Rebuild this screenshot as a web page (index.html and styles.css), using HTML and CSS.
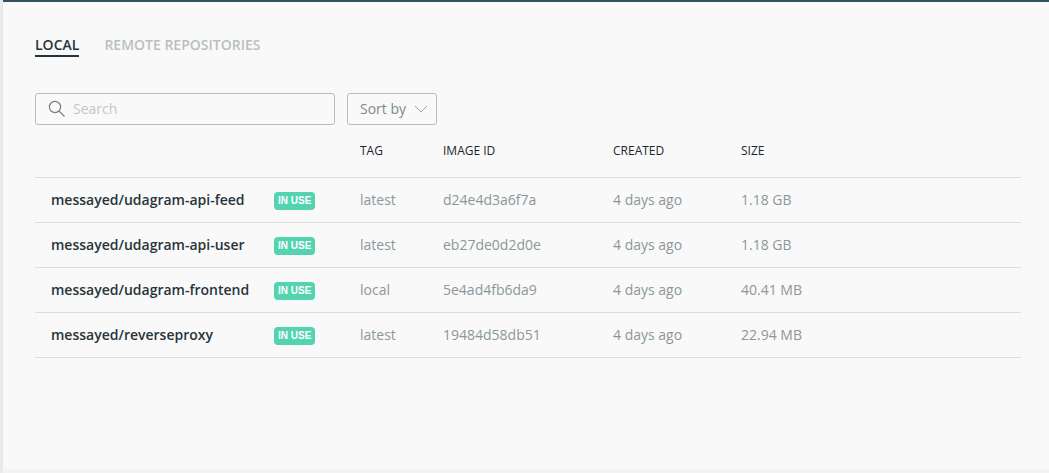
FILE: index.html
```html
<!DOCTYPE html>
<html lang="en">
<head>
<meta charset="utf-8">
<meta name="viewport" content="width=device-width, initial-scale=1">
<title>Images</title>
<link rel="stylesheet" href="styles.css">
</head>
<body>
<main class="page">
  <nav class="tabs" aria-label="Repositories">
    <a class="tab tab-active" href="#local" aria-current="page">LOCAL</a>
    <a class="tab" href="#remote">REMOTE REPOSITORIES</a>
  </nav>
  <form class="toolbar">
    <label class="search">
      <svg class="search-icon" width="18" height="18" viewBox="0 0 18 18" fill="none" stroke="currentColor" stroke-width="1.2" aria-hidden="true">
        <circle cx="7" cy="7" r="5.6"/>
        <path d="M11 11l5.6 5.6"/>
      </svg>
      <input class="search-input" type="search" placeholder="Search" aria-label="Search">
    </label>
    <label class="sort">
      <select class="sort-select" aria-label="Sort by">
        <option>Sort by</option>
      </select>
      <svg class="sort-icon" width="14" height="8" viewBox="0 0 14 8" fill="none" stroke="currentColor" aria-hidden="true">
        <path d="M1 1l6 6 6-6"/>
      </svg>
    </label>
  </form>
  <table class="images">
    <colgroup>
      <col class="col-name"><col class="col-status"><col class="col-tag"><col class="col-id"><col class="col-created"><col>
    </colgroup>
    <thead>
      <tr><td></td><td></td><th scope="col">TAG</th><th scope="col">IMAGE ID</th><th scope="col">CREATED</th><th scope="col">SIZE</th></tr>
    </thead>
    <tbody>
      <tr><th scope="row" class="name">messayed/udagram-api-feed</th><td><span class="badge">IN USE</span></td><td>latest</td><td>d24e4d3a6f7a</td><td>4 days ago</td><td>1.18 GB</td></tr>
      <tr><th scope="row" class="name">messayed/udagram-api-user</th><td><span class="badge">IN USE</span></td><td>latest</td><td>eb27de0d2d0e</td><td>4 days ago</td><td>1.18 GB</td></tr>
      <tr><th scope="row" class="name">messayed/udagram-frontend</th><td><span class="badge">IN USE</span></td><td>local</td><td>5e4ad4fb6da9</td><td>4 days ago</td><td>40.41 MB</td></tr>
      <tr><th scope="row" class="name">messayed/reverseproxy</th><td><span class="badge">IN USE</span></td><td>latest</td><td>19484d58db51</td><td>4 days ago</td><td>22.94 MB</td></tr>
    </tbody>
  </table>
</main>
</body>
</html>
```
FILE: styles.css
```css
* {
  box-sizing: border-box;
}

body {
  margin: 0;
  min-height: 100vh;
  display: flex;
  background: #f9f9f9;
  font-family: "Open Sans", "Noto Sans", sans-serif;
  font-size: 14px;
  line-height: 20px;
  color: #8b9799;
  border-left: 3px solid #e9eaef;
}

.page {
  flex: 1;
  padding: 33px 28px 24px 32px;
  border-top: 2px solid #33535c;
  border-bottom: 4px solid #f3f3f3;
}

.tabs {
  display: flex;
  gap: 25px;
}

.tab {
  color: #b8bfc2;
  font-weight: 600;
  text-decoration: none;
  border-bottom: 2px solid transparent;
}

.tab-active {
  color: #27343b;
  border-bottom-color: #27343b;
}

.toolbar {
  display: flex;
  gap: 12px;
  margin-top: 36px;
}

.search,
.sort {
  display: flex;
  align-items: center;
  height: 32px;
  border: 1px solid #b8bcbe;
  border-radius: 3px;
}

.search {
  width: 300px;
  gap: 7px;
  padding: 0 12px;
}

.search-icon {
  flex: none;
  color: #737c80;
}

.search-input,
.sort-select {
  appearance: none;
  border: 0;
  padding: 0;
  background: transparent;
  font: inherit;
}

.search-input {
  flex: 1;
  min-width: 0;
  color: #27343b;
}

.search-input::placeholder {
  color: #c3c7c9;
}

.sort {
  gap: 7px;
  padding: 0 8px 0 12px;
}

.sort-select {
  color: #7e898e;
}

.sort-icon {
  color: #9aa3a7;
}

.images {
  width: 100%;
  table-layout: fixed;
  border-collapse: collapse;
}

.col-name {
  width: 239px;
}

.col-status {
  width: 86px;
}

.col-tag {
  width: 83px;
}

.col-id {
  width: 170px;
}

.col-created {
  width: 128px;
}

.images td,
.images th {
  height: 45px;
  padding: 0;
  text-align: left;
  border-bottom: 1px solid #dedfe0;
}

.images thead th,
.images thead td {
  height: 52px;
  color: #1c262b;
  font-size: 12px;
  font-weight: 400;
}

.images .name {
  padding-left: 16px;
  color: #27343b;
  font-weight: 600;
}

.badge {
  display: block;
  width: fit-content;
  margin-top: 2px;
  padding: 0 4px;
  border-radius: 4px;
  background: #54d3b0;
  color: #fff;
  font: bold 10px/18px "Liberation Sans", Arial, sans-serif;
}
```
